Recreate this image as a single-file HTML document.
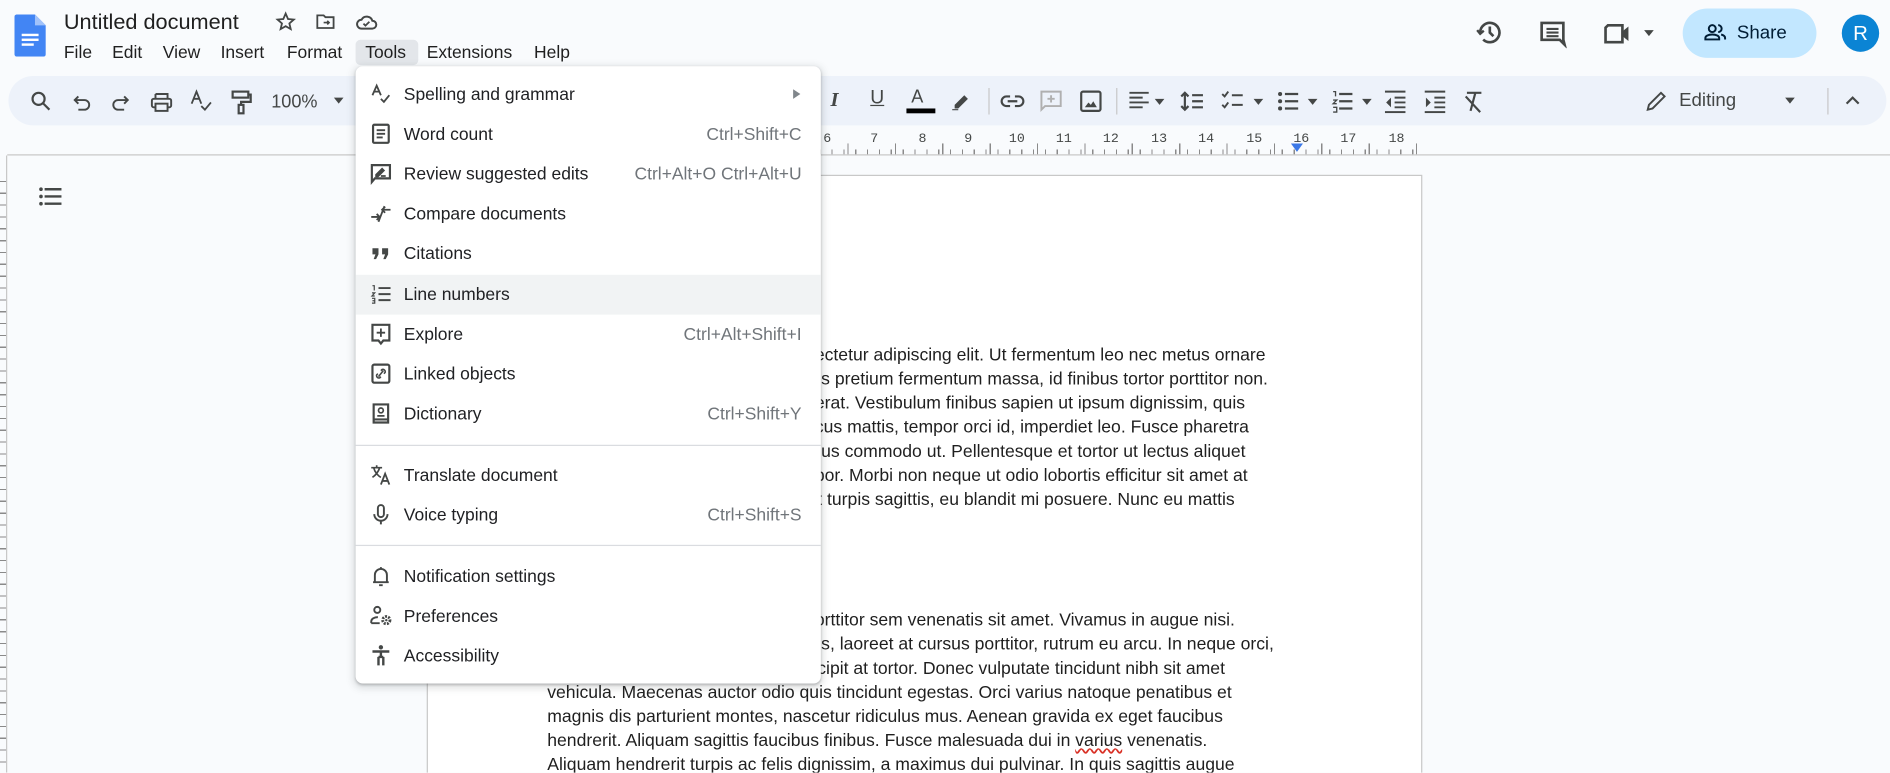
<!DOCTYPE html>
<html><head><meta charset="utf-8"><style>
html,body{margin:0;padding:0;width:1890px;height:772px;overflow:hidden;background:#f9fbfd;}
#w{position:absolute;left:0;top:0;width:1568px;height:641px;transform:scale(1.20536);transform-origin:0 0;font-family:"Liberation Sans",Arial,sans-serif;color:#1f1f1f;background:#f9fbfd;overflow:hidden}
.a{position:absolute}
.ic{position:absolute;width:20px;height:20px}
.ic svg{width:20px;height:20px;display:block}
.mb span{position:absolute;top:36px;font-size:14.5px;color:#1f1f1f}
.tb{position:absolute;left:7px;top:63px;width:1558px;height:41px;background:#edf2fa;border-radius:21px}
.sep{position:absolute;top:73px;width:1px;height:22px;background:#c7c7c7}
.doc{position:absolute;font-size:14.6px;color:#1f1f1f;white-space:nowrap;line-height:20px}
.menu{position:absolute;left:295px;top:55px;width:386px;height:512px;background:#fff;border-radius:6px;box-shadow:0 2px 6px 2px rgba(60,64,67,.15),0 1px 2px rgba(60,64,67,.3)}
.it{position:absolute;left:0;width:386px;height:33px}
.it .t{position:absolute;left:40px;top:9px;font-size:14.5px;color:#202124}
.it .k{position:absolute;right:16px;top:9px;font-size:14.5px;color:#70757a}
.it .ic{left:11px;top:6px}
.hr{position:absolute;left:0;width:386px;height:1px;background:#dadce0}
</style></head><body><div id="w">

<svg class="a" style="left:12px;top:12px" width="26" height="35" viewBox="0 0 26 35"><path d="M2 0h15l9 9v24a2 2 0 0 1-2 2H2a2 2 0 0 1-2-2V2a2 2 0 0 1 2-2z" fill="#4285f4"/><path d="M17 0v9h9z" fill="#a1c2fa"/><rect x="6" y="16" width="14" height="2" fill="#fff"/><rect x="6" y="20" width="14" height="2" fill="#fff"/><rect x="6" y="24" width="10" height="2" fill="#fff"/></svg>
<div class="a" style="left:53px;top:8px;font-size:18px;color:#1f1f1f">Untitled document</div>
<svg class="a" style="left:228px;top:9px" width="18" height="18" viewBox="0 0 24 24"><path d="M12 3l2.6 6 6.4.6-4.9 4.3 1.5 6.3L12 17l-5.6 3.2 1.5-6.3L3 9.6 9.4 9z" fill="none" stroke="#444746" stroke-width="2"/></svg>
<svg class="a" style="left:261px;top:9px" width="18" height="18" viewBox="0 0 24 24"><path d="M3 5h7l2 2h9v12H3z" fill="none" stroke="#444746" stroke-width="2"/><path d="M10 13h6m-2-2l2 2-2 2" fill="none" stroke="#444746" stroke-width="1.8"/></svg>
<svg class="a" style="left:294px;top:9px" width="20" height="18" viewBox="0 0 24 22"><path d="M7 18h11a4 4 0 0 0 0-8 6 6 0 0 0-11-1 4.5 4.5 0 0 0 0 9z" fill="none" stroke="#444746" stroke-width="2"/><path d="M9 13l2 2 4-4" fill="none" stroke="#444746" stroke-width="1.8"/></svg>
<div class="a" style="left:295px;top:33px;width:52px;height:21px;background:#e3e6ea;border-radius:4px"></div>
<div class="mb"><span style="left:53px">File</span><span style="left:93px">Edit</span><span style="left:135px">View</span><span style="left:183px">Insert</span><span style="left:238px">Format</span><span style="left:303px">Tools</span><span style="left:354px">Extensions</span><span style="left:443px">Help</span></div>

<svg class="a" style="left:1224px;top:15px" width="24" height="24" viewBox="0 0 24 24"><path d="M4 12a8 8 0 1 1 2.5 5.8" fill="none" stroke="#444746" stroke-width="2.2"/><path d="M1.5 10l2.5 3 3-2.5" fill="none" stroke="#444746" stroke-width="2"/><path d="M12 7v5l3 3" fill="none" stroke="#444746" stroke-width="2.2"/></svg>
<svg class="a" style="left:1276px;top:16px" width="24" height="24" viewBox="0 0 24 24"><path d="M3 3h18v14H21l1 4-4-4H3z" fill="none" stroke="#444746" stroke-width="2.2"/><path d="M7 8h10M7 11h10M7 14h10" stroke="#444746" stroke-width="1.8"/></svg>
<svg class="a" style="left:1330px;top:17px" width="26" height="22" viewBox="0 0 26 22"><path d="M4 4h12v14H2V6z" fill="none" stroke="#444746" stroke-width="2.2"/><path d="M16 9l5-4v12l-5-4z" fill="#444746"/></svg>
<div class="a" style="left:1364px;top:25px;border:4px solid transparent;border-top:5px solid #444746"></div>
<div class="a" style="left:1396px;top:7px;width:111px;height:41px;background:#c2e7ff;border-radius:21px"></div>
<svg class="a" style="left:1413px;top:18px" width="20" height="18" viewBox="0 0 24 22"><circle cx="9" cy="7" r="3.5" fill="none" stroke="#001d35" stroke-width="2"/><path d="M2 18v-1.5c0-2 3-3.5 7-3.5s7 1.5 7 3.5V18z" fill="none" stroke="#001d35" stroke-width="2"/><path d="M15 3.5a3.5 3.5 0 0 1 0 7M18 13c2 .5 4 1.5 4 3.5V18" fill="none" stroke="#001d35" stroke-width="2"/></svg>
<div class="a" style="left:1441px;top:19px;font-size:15.5px;color:#001d35">Share</div>
<div class="a" style="left:1528px;top:12px;width:31px;height:31px;border-radius:50%;background:#0b84d4;color:#fff;font-size:17px;text-align:center;line-height:31px">R</div>

<div class="tb"></div>
<svg class="a" style="left:25px;top:75px" width="18" height="18" viewBox="0 0 18 18"><circle cx="7" cy="7" r="5" fill="none" stroke="#444746" stroke-width="1.8"/><path d="M11 11l5 5" stroke="#444746" stroke-width="1.8"/></svg>
<svg class="a" style="left:59px;top:76px" width="18" height="18" viewBox="0 0 18 18"><path d="M6 4L3 7l3 3M3 7h8a4 4 0 0 1 0 8H6" fill="none" stroke="#444746" stroke-width="1.6"/></svg>
<svg class="a" style="left:91px;top:76px" width="18" height="18" viewBox="0 0 18 18"><path d="M12 4l3 3-3 3M15 7H7a4 4 0 0 0 0 8h5" fill="none" stroke="#444746" stroke-width="1.6"/></svg>
<svg class="a" style="left:124px;top:75px" width="20" height="20" viewBox="0 0 20 20"><path d="M5 3h10v4M5 7V3" fill="none" stroke="#444746" stroke-width="1.6"/><rect x="2" y="7" width="16" height="7" rx="1.5" fill="none" stroke="#444746" stroke-width="1.6"/><rect x="5" y="11" width="10" height="6" fill="#edf2fa" stroke="#444746" stroke-width="1.6"/></svg>
<svg class="a" style="left:157px;top:74px" width="20" height="20" viewBox="0 0 20 20"><path d="M2 12L6 2l4 10M3.5 8h5" fill="none" stroke="#444746" stroke-width="1.5"/><path d="M10 14l3 3 5-6" fill="none" stroke="#444746" stroke-width="1.5"/></svg>
<svg class="a" style="left:190px;top:74px" width="20" height="22" viewBox="0 0 20 22"><rect x="3" y="2" width="13" height="5" fill="none" stroke="#444746" stroke-width="1.8"/><path d="M16 4.5h2v6H10v3" fill="none" stroke="#444746" stroke-width="1.8"/><rect x="8" y="13" width="4" height="7" fill="none" stroke="#444746" stroke-width="1.8"/></svg>
<div class="a" style="left:225px;top:76px;font-size:15px;color:#444746">100%</div>
<div class="a" style="left:277px;top:81px;border:4.5px solid transparent;border-top:5px solid #444746"></div>

<div class="a" style="left:689px;top:73px;font-size:17px;font-style:italic;font-weight:bold;color:#444746;font-family:'Liberation Serif',serif">I</div>
<div class="a" style="left:722px;top:73px;font-size:16px;color:#444746;text-decoration:underline">U</div>
<div class="a" style="left:756px;top:72px;font-size:15px;color:#444746">A</div>
<div class="a" style="left:752px;top:90px;width:24px;height:4px;background:#000"></div>
<svg class="a" style="left:788px;top:75px" width="18" height="18" viewBox="0 0 18 18"><path d="M4 12l8-8 3 3-8 8H4z" fill="#444746"/><path d="M2 16h5" stroke="#444746" stroke-width="1"/></svg>
<div class="sep" style="left:820px"></div>
<svg class="a" style="left:830px;top:77px" width="20" height="14" viewBox="0 0 20 14"><path d="M8 3H5a4 4 0 0 0 0 8h3M12 3h3a4 4 0 0 1 0 8h-3M6 7h8" fill="none" stroke="#444746" stroke-width="1.8"/></svg>
<svg class="a" style="left:862px;top:74px" width="20" height="20" viewBox="0 0 20 20"><path d="M2 2h16v12H5l-3 3z" fill="none" stroke="#b0b0b0" stroke-width="1.6"/><path d="M10 5v6M7 8h6" stroke="#b0b0b0" stroke-width="1.6"/></svg>
<svg class="a" style="left:895px;top:74px" width="20" height="20" viewBox="0 0 20 20"><rect x="2" y="2" width="16" height="16" rx="1.5" fill="none" stroke="#444746" stroke-width="1.8"/><path d="M5 15l3-4 2 2 2-3 3 5z" fill="#444746"/></svg>
<div class="sep" style="left:926px"></div>
<svg class="a" style="left:936px;top:75px" width="20" height="18" viewBox="0 0 20 18"><path d="M1 2h16M1 6h11M1 10h16M1 14h11" stroke="#444746" stroke-width="1.6"/></svg>
<div class="a" style="left:958px;top:82px;border:4px solid transparent;border-top:5px solid #444746"></div>
<svg class="a" style="left:979px;top:74px" width="20" height="20" viewBox="0 0 20 20"><path d="M4 3v14M1 6l3-3 3 3M1 14l3 3 3-3M10 5h9M10 10h9M10 15h9" fill="none" stroke="#444746" stroke-width="1.8"/></svg>
<svg class="a" style="left:1013px;top:74px" width="20" height="20" viewBox="0 0 20 20"><path d="M1 4l2 2 3-4M1 13l2 2 3-4M9 5h9M9 13h9" fill="none" stroke="#444746" stroke-width="1.6"/></svg>
<div class="a" style="left:1040px;top:82px;border:4px solid transparent;border-top:5px solid #444746"></div>
<svg class="a" style="left:1059px;top:74px" width="20" height="20" viewBox="0 0 20 20"><circle cx="3" cy="4" r="1.7" fill="#444746"/><circle cx="3" cy="10" r="1.7" fill="#444746"/><circle cx="3" cy="16" r="1.7" fill="#444746"/><path d="M7 4h11M7 10h11M7 16h11" stroke="#444746" stroke-width="1.8"/></svg>
<div class="a" style="left:1085px;top:82px;border:4px solid transparent;border-top:5px solid #444746"></div>
<svg class="a" style="left:1104px;top:74px" width="20" height="20" viewBox="0 0 20 20"><path d="M2 2h2v4M2 9h3l-3 3h3M2 15h3v4H2" fill="none" stroke="#444746" stroke-width="1.1"/><path d="M7 4h11M7 10h11M7 16h11" stroke="#444746" stroke-width="1.8"/></svg>
<div class="a" style="left:1130px;top:82px;border:4px solid transparent;border-top:5px solid #444746"></div>
<svg class="a" style="left:1148px;top:74px" width="20" height="20" viewBox="0 0 20 20"><path d="M1 2h17M9 7h9M9 11h9M9 15h9M1 19h17" stroke="#444746" stroke-width="1.6"/><path d="M6 7l-4 4 4 4z" fill="#444746"/></svg>
<svg class="a" style="left:1181px;top:74px" width="20" height="20" viewBox="0 0 20 20"><path d="M1 2h17M9 7h9M9 11h9M9 15h9M1 19h17" stroke="#444746" stroke-width="1.6"/><path d="M2 7l4 4-4 4z" fill="#444746"/></svg>
<svg class="a" style="left:1213px;top:74px" width="20" height="20" viewBox="0 0 20 20"><path d="M4 3h12M11 3l-4 15M3 6l12 13" fill="none" stroke="#444746" stroke-width="1.8"/></svg>
<svg class="a" style="left:1364px;top:74px" width="20" height="20" viewBox="0 0 20 20"><path d="M3 17l1-4L14 3l3 3L7 16z" fill="none" stroke="#444746" stroke-width="1.6"/></svg>
<div class="a" style="left:1393px;top:75px;font-size:15.5px;color:#444746">Editing</div>
<div class="a" style="left:1481px;top:81px;border:4.5px solid transparent;border-top:5px solid #444746"></div>
<div class="sep" style="left:1516px"></div>
<svg class="a" style="left:1530px;top:78px" width="14" height="10" viewBox="0 0 14 10"><path d="M2 8l5-5 5 5" fill="none" stroke="#444746" stroke-width="1.8"/></svg>

<div class="a" style="left:6px;top:128px;width:1562px;height:1px;background:#c7c7c7"></div>
<div class="a" style="left:680px;top:124px;width:498px;height:4px;background:repeating-linear-gradient(90deg,#8a8a8a 0 1px,transparent 1px 9.83px)"></div>
<div class="a" style="left:684px;top:119px;width:494px;height:9px;background:repeating-linear-gradient(90deg,transparent 0 19.1px,#8a8a8a 19.1px 20.1px,transparent 20.1px 39.3px)"></div>
<div class="a" style="left:680px;top:110px;width:520px;font-size:11px;color:#444746;font-family:'Liberation Mono',monospace">
<span class="a" style="left:3px">6</span><span class="a" style="left:42px">7</span><span class="a" style="left:82px">8</span><span class="a" style="left:120px">9</span><span class="a" style="left:157px">10</span><span class="a" style="left:196px">11</span><span class="a" style="left:235px">12</span><span class="a" style="left:275px">13</span><span class="a" style="left:314px">14</span><span class="a" style="left:354px">15</span><span class="a" style="left:393px">16</span><span class="a" style="left:432px">17</span><span class="a" style="left:472px">18</span></div>
<div class="a" style="left:1071px;top:119px;border:5px solid transparent;border-top:7px solid #3b78e7"></div>

<div class="a" style="left:5px;top:129px;width:1px;height:512px;background:#c7c7c7"></div>
<div class="a" style="left:0;top:150px;width:5px;height:491px;background:repeating-linear-gradient(180deg,#8a8a8a 0 1px,transparent 1px 9.83px)"></div>

<svg class="a" style="left:32px;top:155px" width="20" height="16" viewBox="0 0 20 16"><circle cx="2" cy="2" r="1.5" fill="#444746"/><circle cx="2" cy="8" r="1.5" fill="#444746"/><circle cx="2" cy="14" r="1.5" fill="#444746"/><path d="M5 2h14M5 8h14M5 14h14" stroke="#444746" stroke-width="2"/></svg>

<div class="a" style="left:354px;top:145px;width:824px;height:500px;background:#fff;border:1px solid #c7c7c7"></div>
<div class="doc" style="left:676px;top:285px">ectetur adipiscing elit. Ut fermentum leo nec metus ornare</div>
<div class="doc" style="left:678px;top:305px">is pretium fermentum massa, id finibus tortor porttitor non.</div>
<div class="doc" style="left:676px;top:325px">erat. Vestibulum finibus sapien ut ipsum dignissim, quis</div>
<div class="doc" style="left:676px;top:345px">cus mattis, tempor orci id, imperdiet leo. Fusce pharetra</div>
<div class="doc" style="left:678px;top:365px">lus commodo ut. Pellentesque et tortor ut lectus aliquet</div>
<div class="doc" style="left:676px;top:385px">por. Morbi non neque ut odio lobortis efficitur sit amet at</div>
<div class="doc" style="left:678px;top:405px">t turpis sagittis, eu blandit mi posuere. Nunc eu mattis</div>
<div class="doc" style="left:676px;top:505px">orttitor sem venenatis sit amet. Vivamus in augue nisi.</div>
<div class="doc" style="left:678px;top:525px">is, laoreet at cursus porttitor, rutrum eu arcu. In neque orci,</div>
<div class="doc" style="left:678px;top:545px">cipit at tortor. Donec vulputate tincidunt nibh sit amet</div>
<div class="doc" style="left:454px;top:565px">vehicula. Maecenas auctor odio quis tincidunt egestas. Orci varius natoque penatibus et</div>
<div class="doc" style="left:454px;top:585px">magnis dis parturient montes, nascetur ridiculus mus. Aenean gravida ex eget faucibus</div>
<div class="doc" style="left:454px;top:605px">hendrerit. Aliquam sagittis faucibus finibus. Fusce malesuada dui in <span style="text-decoration:underline wavy #d93025">varius</span> venenatis.</div>
<div class="doc" style="left:454px;top:625px">Aliquam hendrerit turpis ac felis dignissim, a maximus dui pulvinar. In quis sagittis augue</div>

<div class="menu">
<div class="it" style="top:7px"><div class="ic"><svg viewBox="0 0 20 20"><path d="M3 11L6.5 3l3.5 8M4.3 8h4.4" fill="none" stroke="#444746" stroke-width="1.5"/><path d="M10 14l2.5 2.5L17 11" fill="none" stroke="#444746" stroke-width="1.5"/></svg></div><span class="t">Spelling and grammar</span><div class="a" style="right:17px;top:12px;border:4px solid transparent;border-left:6px solid #80868b;border-right:0"></div></div>
<div class="it" style="top:40px"><div class="ic"><svg viewBox="0 0 20 20"><rect x="3.5" y="2.5" width="13" height="15" rx="1" fill="none" stroke="#444746" stroke-width="1.8"/><path d="M6.5 7h7M6.5 10h7M6.5 13h5" stroke="#444746" stroke-width="1.5"/></svg></div><span class="t">Word count</span><span class="k">Ctrl+Shift+C</span></div>
<div class="it" style="top:73px"><div class="ic"><svg viewBox="0 0 20 20"><path d="M2.5 3h15v11H5l-2.5 3z" fill="none" stroke="#444746" stroke-width="1.8"/><path d="M6 11l5-5 1.5 1.5-5 5H6zM10 12h4" stroke="#444746" stroke-width="1.4" fill="#444746"/></svg></div><span class="t">Review suggested edits</span><span class="k">Ctrl+Alt+O Ctrl+Alt+U</span></div>
<div class="it" style="top:106px"><div class="ic"><svg viewBox="0 0 20 20"><path d="M2 13h7M6.5 10.5L9 13l-2.5 2.5M18 7h-7M13.5 4.5L11 7l2.5 2.5M8 17l5-13" fill="none" stroke="#444746" stroke-width="1.5"/></svg></div><span class="t">Compare documents</span></div>
<div class="it" style="top:139px"><div class="ic"><svg viewBox="0 0 20 20"><path d="M3 6h5v5l-2 4H4l1.5-4H3zM11 6h5v5l-2 4h-2l1.5-4H11z" fill="#444746"/></svg></div><span class="t">Citations</span></div>
<div class="it" style="top:173px;background:#f1f3f4"><div class="ic"><svg viewBox="0 0 20 20"><path d="M3 3h1.5v4M2.6 9h2.3l-2.3 2.6h2.3M2.6 13.5h2.3v4H2.6M3 15.5h2" fill="none" stroke="#444746" stroke-width="1"/><path d="M8 5h10M8 10h10M8 15h10" stroke="#444746" stroke-width="1.6"/></svg></div><span class="t">Line numbers</span></div>
<div class="it" style="top:206px"><div class="ic"><svg viewBox="0 0 20 20"><path d="M3 2.5h14v13H12l-2 2.5-2-2.5H3z" fill="none" stroke="#444746" stroke-width="1.8"/><path d="M10 5.5v7M6.5 9h7" stroke="#444746" stroke-width="1.5"/></svg></div><span class="t">Explore</span><span class="k">Ctrl+Alt+Shift+I</span></div>
<div class="it" style="top:239px"><div class="ic"><svg viewBox="0 0 20 20"><rect x="3" y="2.5" width="14" height="15" rx="1.5" fill="none" stroke="#444746" stroke-width="1.8"/><path d="M8 12.5l4-5M7.5 10l-1 1a2 2 0 0 0 2.5 2.5l1-1M12.5 10l1-1a2 2 0 0 0-2.5-2.5l-1 1" fill="none" stroke="#444746" stroke-width="1.3"/></svg></div><span class="t">Linked objects</span></div>
<div class="it" style="top:272px"><div class="ic"><svg viewBox="0 0 20 20"><path d="M4 2.5h12v15H4zM4 15h12" fill="none" stroke="#444746" stroke-width="1.8"/><circle cx="10" cy="7.5" r="2" fill="none" stroke="#444746" stroke-width="1.4"/><path d="M7 12h6" stroke="#444746" stroke-width="1.4"/></svg></div><span class="t">Dictionary</span><span class="k">Ctrl+Shift+Y</span></div>
<div class="hr" style="top:314px"></div>
<div class="it" style="top:323px"><div class="ic"><svg viewBox="0 0 20 20"><path d="M2 4h9M6.5 2v2M4 4c1 4 4 7 6 8M9 4c-1 3-3 6-6 8" fill="none" stroke="#444746" stroke-width="1.4"/><path d="M10 18l3.5-9 3.5 9M11.2 15h4.6" fill="none" stroke="#444746" stroke-width="1.5"/></svg></div><span class="t">Translate document</span></div>
<div class="it" style="top:356px"><div class="ic"><svg viewBox="0 0 20 20"><rect x="7.5" y="2" width="5" height="10" rx="2.5" fill="none" stroke="#444746" stroke-width="1.6"/><path d="M4.5 9.5a5.5 5.5 0 0 0 11 0M10 15v3" fill="none" stroke="#444746" stroke-width="1.6"/></svg></div><span class="t">Voice typing</span><span class="k">Ctrl+Shift+S</span></div>
<div class="hr" style="top:397px"></div>
<div class="it" style="top:407px"><div class="ic"><svg viewBox="0 0 20 20"><path d="M5 15V9a5 5 0 0 1 10 0v6zM3.5 15h13M8.5 17.5h3M10 2.5v1.5" fill="none" stroke="#444746" stroke-width="1.6"/></svg></div><span class="t">Notification settings</span></div>
<div class="it" style="top:440px"><div class="ic"><svg viewBox="0 0 20 20"><circle cx="7" cy="5" r="2.5" fill="none" stroke="#444746" stroke-width="1.6"/><path d="M2 16v-1.5c0-2 2.5-3.5 5.5-3.5" fill="none" stroke="#444746" stroke-width="1.6"/><path d="M2 16h7" stroke="#444746" stroke-width="1.6"/><circle cx="14.5" cy="13.5" r="3" fill="none" stroke="#444746" stroke-width="2.4" stroke-dasharray="1.6 1"/><circle cx="14.5" cy="13.5" r="1" fill="#444746"/></svg></div><span class="t">Preferences</span></div>
<div class="it" style="top:473px"><div class="ic"><svg viewBox="0 0 20 20"><circle cx="10" cy="3" r="1.8" fill="#444746"/><path d="M3 6.5h14M10 6.5v5M8 11v7M12 11v7M8 11h4" fill="none" stroke="#444746" stroke-width="2"/></svg></div><span class="t">Accessibility</span></div>
</div>

</div></body></html>
